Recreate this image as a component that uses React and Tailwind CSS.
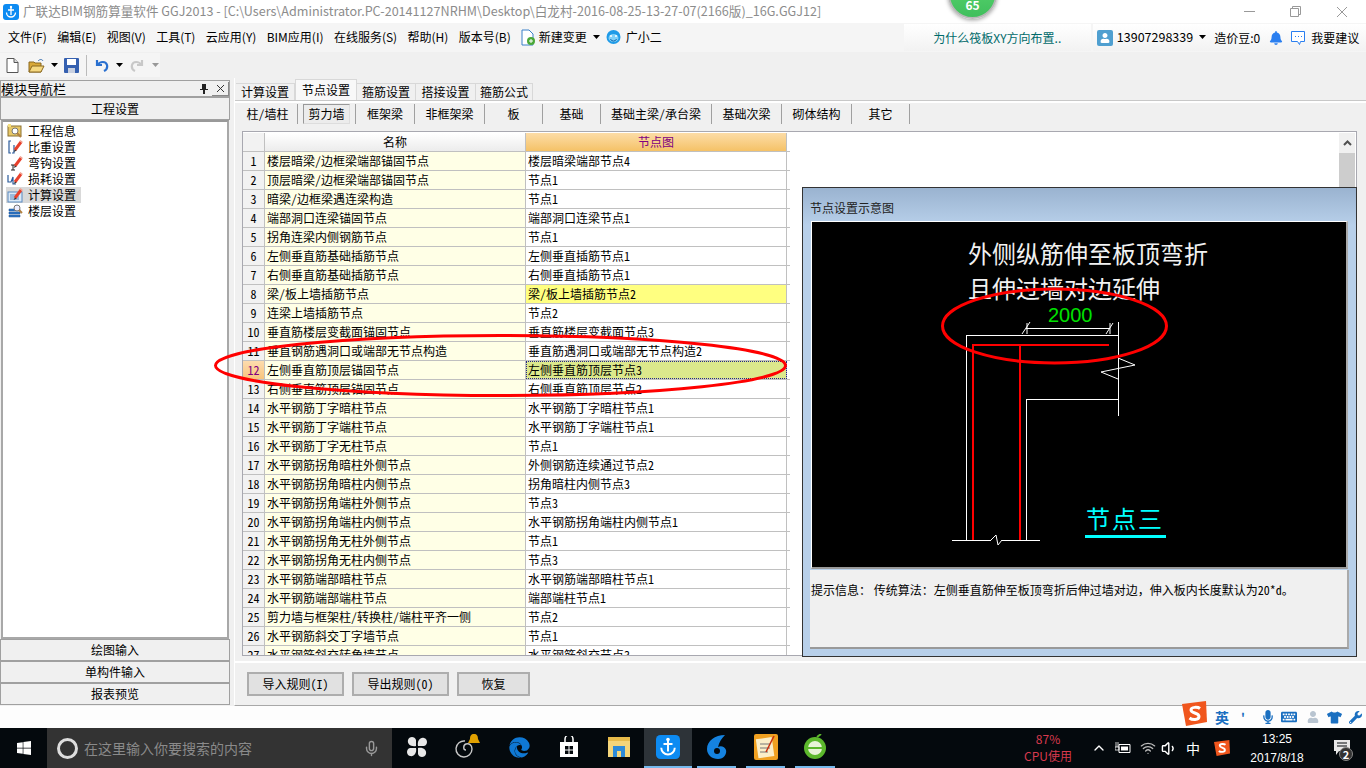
import React from "react";
import { FaWindows, FaEdge, FaBell, FaTshirt, FaWrench, FaMicrophone, FaKeyboard, FaUser } from "react-icons/fa";
import { Wifi, Volume1, ChevronUp, Mic } from "lucide-react";

const menus = ["文件(F)", "编辑(E)", "视图(V)", "工具(T)", "云应用(Y)", "BIM应用(I)", "在线服务(S)", "帮助(H)", "版本号(B)"];

const tabs = [
  { label: "计算设置", width: "w-[59px]" },
  { label: "节点设置", width: "w-[62px]", active: true },
  { label: "箍筋设置", width: "w-[59px]" },
  { label: "搭接设置", width: "w-[60px]" },
  { label: "箍筋公式", width: "w-[57px]" },
];

const subTabs = [
  { label: "柱/墙柱", width: "w-[60px]" },
  { label: "剪力墙", width: "w-[58px]", active: true },
  { label: "框架梁", width: "w-[59px]" },
  { label: "非框架梁", width: "w-[70px]" },
  { label: "板", width: "w-[58px]" },
  { label: "基础", width: "w-[58px]" },
  { label: "基础主梁/承台梁", width: "w-[111px]" },
  { label: "基础次梁", width: "w-[70px]" },
  { label: "砌体结构", width: "w-[70px]" },
  { label: "其它", width: "w-[58px]" },
];

const rows = [
  ["楼层暗梁/边框梁端部锚固节点", "楼层暗梁端部节点4"],
  ["顶层暗梁/边框梁端部锚固节点", "节点1"],
  ["暗梁/边框梁遇连梁构造", "节点1"],
  ["端部洞口连梁锚固节点", "端部洞口连梁节点1"],
  ["拐角连梁内侧钢筋节点", "节点1"],
  ["左侧垂直筋基础插筋节点", "左侧垂直插筋节点1"],
  ["右侧垂直筋基础插筋节点", "右侧垂直插筋节点1"],
  ["梁/板上墙插筋节点", "梁/板上墙插筋节点2"],
  ["连梁上墙插筋节点", "节点2"],
  ["垂直筋楼层变截面锚固节点", "垂直筋楼层变截面节点3"],
  ["垂直钢筋遇洞口或端部无节点构造", "垂直筋遇洞口或端部无节点构造2"],
  ["左侧垂直筋顶层锚固节点", "左侧垂直筋顶层节点3"],
  ["右侧垂直筋顶层锚固节点", "右侧垂直筋顶层节点2"],
  ["水平钢筋丁字暗柱节点", "水平钢筋丁字暗柱节点1"],
  ["水平钢筋丁字端柱节点", "水平钢筋丁字端柱节点1"],
  ["水平钢筋丁字无柱节点", "节点1"],
  ["水平钢筋拐角暗柱外侧节点", "外侧钢筋连续通过节点2"],
  ["水平钢筋拐角暗柱内侧节点", "拐角暗柱内侧节点3"],
  ["水平钢筋拐角端柱外侧节点", "节点3"],
  ["水平钢筋拐角端柱内侧节点", "水平钢筋拐角端柱内侧节点1"],
  ["水平钢筋拐角无柱外侧节点", "节点1"],
  ["水平钢筋拐角无柱内侧节点", "节点3"],
  ["水平钢筋端部暗柱节点", "水平钢筋端部暗柱节点1"],
  ["水平钢筋端部端柱节点", "端部端柱节点1"],
  ["剪力墙与框架柱/转换柱/端柱平齐一侧", "节点2"],
  ["水平钢筋斜交丁字墙节点", "节点1"],
  ["水平钢筋斜交转角墙节点", "水平钢筋斜交节点3"],
];

// little app logo, used in the title bar and on the taskbar
const GldIcon = ({ size = 16 }) => (
  <svg width={size} height={size} viewBox="0 0 16 16">
    <rect width="16" height="16" rx="3" fill="#0d8bf2" />
    <path d="M8 3v8M5 6h6M3.5 8.500a4.500 4.500 0 0 0 9 0" stroke="#fff" strokeWidth="1.300" fill="none" />
    <circle cx="8" cy="3" r="1.200" fill="#fff" />
  </svg>
);

const Caret = ({ color = "#000" }) => (
  <svg width="7" height="4" viewBox="0 0 7 4"><path d="M0 0h7L3.500 4z" fill={color} /></svg>
);

const Pencil = () => (
  <g>
    <path d="M8 11 14 3" stroke="#e8412c" strokeWidth="3" />
    <path d="M13 1.500l2.500 2" stroke="#f0a090" strokeWidth="1.500" />
    <path d="M6.500 13 8 10.500l1.600 1.200z" fill="#333" />
  </g>
);

const NavIcon = ({ type }) => {
  if (type === "info") {
    return (
      <svg width="16" height="16" viewBox="0 0 16 16">
        <rect x="1" y="3" width="13" height="10" fill="#e8c868" stroke="#8a7030" />
        <path d="M1 1h3v3H1z" fill="#f5e080" />
        <circle cx="8" cy="8" r="3" fill="#fff" stroke="#777" />
        <path d="M10 10l4 4" stroke="#b08040" strokeWidth="2" />
      </svg>
    );
  }
  if (type === "density") {
    return (
      <svg width="16" height="16" viewBox="0 0 16 16">
        <path d="M4 2H2v12h2M7 6v8H5" stroke="#2a5a9a" strokeWidth="1.200" fill="none" />
        <Pencil />
      </svg>
    );
  }
  if (type === "hook") {
    return (
      <svg width="16" height="16" viewBox="0 0 16 16">
        <path d="M4 10h4M6 10v5M4 15h4" stroke="#222" strokeWidth="1" fill="none" />
        <Pencil />
      </svg>
    );
  }
  if (type === "loss") {
    return (
      <svg width="16" height="16" viewBox="0 0 16 16">
        <path d="M1 4v7h3l2-5v7h3" stroke="#2a5a9a" strokeWidth="1.200" fill="none" />
        <Pencil />
      </svg>
    );
  }
  if (type === "calc") {
    return (
      <svg width="16" height="16" viewBox="0 0 16 16">
        <rect x="1" y="5" width="14" height="10" fill="#dbe9f7" stroke="#5a8ac0" />
        <path d="M3 8h7M3 10h9M3 12h9" stroke="#5a8ac0" />
        <Pencil />
      </svg>
    );
  }
  return (
    <svg width="16" height="16" viewBox="0 0 16 16">
      <path d="M2 6h11v2H2zM2 9h11v2H2zM2 12h11v2H2z" fill="#2f78c8" stroke="#1a4f90" strokeWidth=".5" />
      <circle cx="10" cy="5" r="3" fill="#eef" stroke="#777" />
      <path d="M12 7l3 3" stroke="#b08040" strokeWidth="2" />
    </svg>
  );
};

const navItems = [
  { label: "工程信息", type: "info" },
  { label: "比重设置", type: "density" },
  { label: "弯钩设置", type: "hook" },
  { label: "损耗设置", type: "loss" },
  { label: "计算设置", type: "calc", active: true },
  { label: "楼层设置", type: "floor" },
];

const TitleBar = () => (
  <div className="h-[23px] bg-white flex items-center pl-[3px]">
    <GldIcon />
    <span className="ml-[4px] text-[#8c8c8c] text-[12.6px] whitespace-nowrap">
      广联达BIM钢筋算量软件 GGJ2013 - [C:\Users\Administrator.PC-20141127NRHM\Desktop\白龙村-2016-08-25-13-27-07(2166版)_16G.GGJ12]
    </span>
    <div className="ml-auto flex items-center text-[#999]">
      <svg width="11" height="1" className="mr-[35px]"><path d="M0 .5h11" stroke="#999" /></svg>
      <svg width="11" height="11" viewBox="0 0 11 11" className="mr-[35px]">
        <path d="M.5 2.500h8v8h-8zM2.500 2.500v-2h8v8h-2" fill="none" stroke="#999" />
      </svg>
      <svg width="12" height="12" viewBox="0 0 12 12" className="mr-[18px]">
        <path d="M1 1l10 10M11 1L1 11" stroke="#999" />
      </svg>
    </div>
  </div>
);

const MenuBar = () => (
  <div className="h-[29px] flex items-center pl-[8px] bg-[#f5f5f5]">
    <div className="flex gap-[10.4px] whitespace-nowrap pb-[1px]">
      {menus.map((m) => (
        <span key={m}>{m}</span>
      ))}
    </div>
    <svg width="14" height="17" viewBox="0 0 14 17" className="ml-[10px]">
      <path d="M1 1h7l4 4v11H1z" fill="#fff" stroke="#3a80c8" />
      <circle cx="10" cy="12" r="4" fill="#4aa838" />
      <path d="M8 12h4M10 10v4" stroke="#fff" />
    </svg>
    <span className="ml-[4px] pb-[1px]">新建变更</span>
    <span className="ml-[6px] mb-[2px]"><Caret /></span>
    <svg width="17" height="17" viewBox="0 0 17 17" className="ml-[5px]">
      <circle cx="8.500" cy="8" r="7" fill="#1f9be8" />
      <ellipse cx="8.500" cy="9" rx="5" ry="4" fill="#7fd0f8" />
      <circle cx="6" cy="7" r="1" fill="#fff" />
      <circle cx="11" cy="7" r="1" fill="#fff" />
      <path d="M5.500 10a3.200 3.200 0 0 0 6 0" stroke="#0a60a8" fill="none" />
    </svg>
    <span className="ml-[4px] pb-[1px]">广小二</span>
    <div className="ml-[242px] w-[187px] h-[27px] bg-gradient-to-b from-[#ffffff] to-[#f2f2f2] flex items-center justify-center text-[#006a6a]">
      为什么筏板XY方向布置..
    </div>
    <div className="ml-[2px] flex-1 h-[27px] bg-gradient-to-b from-[#ffffff] to-[#f2f2f2] flex items-center pl-[4px] whitespace-nowrap">
      <span className="w-[16px] h-[16px] rounded-[2px] bg-[#4f9fd0] flex items-center justify-center">
        <FaUser size={10} color="#fff" />
      </span>
      <span className="ml-[4px] text-[12.5px]">13907298339</span>
      <span className="ml-[6px] mb-[2px]"><Caret /></span>
      <span className="ml-[8px]">造价豆:0</span>
      <span className="ml-[9px]"><FaBell size={14} color="#2a7ff0" /></span>
      <svg width="16" height="16" viewBox="0 0 16 16" className="ml-[7px]">
        <path d="M1.500 1.500h13v10h-4l-1 3-2-3h-6z" fill="#fff" stroke="#2a7ff0" />
        <path d="M5 6.500h1M8 6.500h1M11 6.500h1" stroke="#2a7ff0" />
      </svg>
      <span className="ml-[5px]">我要建议</span>
    </div>
  </div>
);

const Toolbar = () => (
  <div className="h-[26px] flex items-center">
    <div className="w-[160px] h-[24px] bg-[#f5f5f5] flex items-center pl-[6px]">
      <svg width="13" height="15" viewBox="0 0 13 15">
        <path d="M1 .5h7l4 4v10H1z" fill="#fff" stroke="#555" />
        <path d="M8 .5v4h4" fill="#ddd" stroke="#555" />
      </svg>
      <svg width="17" height="15" viewBox="0 0 17 15" className="ml-[9px]">
        <path d="M1 14V4h5l1 1h6v9z" fill="#d8a838" stroke="#8a6820" />
        <path d="M1 14l3-6h12l-3 6z" fill="#f5d880" stroke="#8a6820" />
        <path d="M10 3c2-2 4-2 5 0" stroke="#3a70b0" fill="none" />
      </svg>
      <span className="ml-[6px]"><Caret /></span>
      <svg width="15" height="15" viewBox="0 0 15 15" className="ml-[6px]">
        <rect width="15" height="15" rx="1" fill="#3560b0" />
        <rect x="3" y="1" width="9" height="6" fill="#fff" />
        <rect x="4" y="10" width="7" height="5" fill="#c8d0e0" />
      </svg>
      <span className="ml-[7px] w-[1px] h-[21px] bg-[#bbb]" />
      <svg width="14" height="15" viewBox="0 0 14 15" className="ml-[8px]">
        <path d="M2 2v5h5M2.500 7C5 3 11 3 12 7c.7 3-1 5-3 6" stroke="#2a70d0" strokeWidth="2.200" fill="none" />
      </svg>
      <span className="ml-[7px]"><Caret /></span>
      <svg width="14" height="15" viewBox="0 0 14 15" className="ml-[7px]">
        <path d="M12 2v5H7M11.500 7C9 3 3 3 2 7c-.7 3 1 5 3 6" stroke="#c8c8c8" strokeWidth="2.200" fill="none" />
      </svg>
      <span className="ml-[8px]"><Caret color="#999" /></span>
    </div>
  </div>
);

const SideNav = () => (
  <div className="w-[230px] pt-[2px] flex flex-col">
    <div className="h-[17px] border border-[#a0a0a0] flex items-center justify-between text-[13px] leading-none whitespace-nowrap">
      <span>模块导航栏</span>
      <div className="flex items-center gap-[4px]">
        <svg width="8" height="10" viewBox="0 0 8 10"><path d="M2 0h4v5h2v1H5v4H3V6H0V5h2z" fill="#222" /></svg>
        <span className="w-[17px] h-[14px] border-b border-r border-[#888] flex items-center justify-center">
          <svg width="9" height="9" viewBox="0 0 9 9"><path d="M1 1l7 7M8 1L1 8" stroke="#333" /></svg>
        </span>
      </div>
    </div>
    <div className="h-[23px] border border-[#a0a0a0] flex items-center justify-center">工程设置</div>
    <div className="h-[519px] mx-[1px] border-2 border-[#a8a8a8] border-t-[#999] bg-white pt-[1px] pl-[3px]">
      {navItems.map((item) => (
        <div key={item.label} className={`h-[16px] w-[75px] flex items-center pl-[1px] ${item.active ? "bg-[#d9d9d9]" : ""}`}>
          <NavIcon type={item.type} />
          <span className="ml-[5px] leading-none whitespace-nowrap">{item.label}</span>
        </div>
      ))}
    </div>
    {["绘图输入", "单构件输入", "报表预览"].map((b) => (
      <div key={b} className="h-[22px] border border-[#a0a0a0] flex items-center justify-center">{b}</div>
    ))}
  </div>
);

const TableRow = ({ n, name, node }) => {
  const selected = n === 12;
  let nodeClass = "bg-white";
  if (n === 8) nodeClass = "bg-[#ffff80]";
  if (selected) nodeClass = "bg-[#dce88c] outline-1 outline-dotted outline-[#22228a] -outline-offset-1";
  return (
    <div className="flex h-[19px] shrink-0 border-b border-[#c0c0c0] leading-[18px] whitespace-nowrap">
      <div className={`w-[22px] shrink-0 border-r border-[#c0c0c0] text-center ${selected ? "bg-gradient-to-b from-[#fddcae] to-[#f8c47c] text-[#800080]" : "bg-[#f2f2f2]"}`}>{n}</div>
      <div className="w-[261px] shrink-0 border-r border-[#c0c0c0] bg-[#ffffe6] pl-[2px] overflow-hidden">{name}</div>
      <div className={`w-[261px] shrink-0 border-r border-[#c0c0c0] pl-[2px] overflow-hidden ${nodeClass}`}>{node}</div>
    </div>
  );
};

const Diagram = () => (
  <div className="relative h-[348px] bg-black border-t border-l border-t-white border-l-white border-b-2 border-r-2 border-b-[#999] border-r-[#aaa]">
    <svg width="536" height="347" viewBox="812 222 536 347" className="block">
      <g stroke="#fff" fill="none" shapeRendering="crispEdges">
        <path d="M966 540V335H1118M1118 322V416M1026 540V399H1118M952 540H991M1002 540H1040" />
        <path d="M1026 328H1110" />
      </g>
      <g stroke="#fff" fill="none">
        <path d="M1118 358L1135 365L1101 372L1118 379" />
        <path d="M1022 334L1030 322M1106 334L1113 323M1027 323V334M1110 323V334" />
        <path d="M991 540L996 535L998 545L1002 540" />
      </g>
      <path d="M973 540V345H1109" stroke="#f00" strokeWidth="2" fill="none" />
      <path d="M1020 345V540" stroke="#f00" strokeWidth="2" />
    </svg>
    <div className="absolute left-[156px] top-[16px] text-[24px] leading-[30px] text-[#f2f2f2] whitespace-nowrap">外侧纵筋伸至板顶弯折</div>
    <div className="absolute left-[156px] top-[51px] text-[24px] leading-[30px] text-[#f2f2f2] whitespace-nowrap">且伸过墙对边延伸</div>
    <div className="absolute left-[236px] top-[83px] text-[20px] leading-[20px] text-[#00e000] [font-family:'Liberation_Sans',sans-serif]">2000</div>
    <div className="absolute left-[274px] top-[281px] text-[24px] tracking-[2px] leading-[30px] text-[#00ffff] whitespace-nowrap">节点三</div>
    <div className="absolute left-[273px] top-[313px] w-[81px] h-[3px] bg-[#00ffff]" />
  </div>
);

const NodeDialog = () => (
  <div className="absolute left-[559px] top-[55px] w-[555px] h-[470px] border border-[#333] bg-gradient-to-b from-[#9ab3d0] from-0% to-[#b8d0ea] to-[8%] flex flex-col px-[7px] z-10">
    <div className="h-[33px] shrink-0 flex items-center pt-[7px] text-[#222]">节点设置示意图</div>
    <div className="ml-[1px] mr-[1px]"><Diagram /></div>
    <div className="mt-[1px] h-[79px] bg-[#f0f0f0] border-b-2 border-r-2 border-b-[#999] border-r-[#aaa] pt-[12px] pl-[1px] leading-[16px] whitespace-nowrap">
      提示信息： 传统算法：左侧垂直筋伸至板顶弯折后伸过墙对边，伸入板内长度默认为<span className="[font-feature-settings:'hwid']">20*d</span>。
    </div>
  </div>
);

const RuleTable = () => (
  <div className="relative ml-[7px] mr-[9px] h-[525px] border border-[#a8a8b0] bg-white flex pt-[1px]">
    <div className="w-[547px] flex flex-col overflow-hidden [font-feature-settings:'hwid']">
      <div className="flex h-[19px] shrink-0 border-b border-[#c0c0c0] leading-[18px]">
        <div className="w-[22px] shrink-0 border-r border-[#c0c0c0] bg-[#f2f2f2]" />
        <div className="w-[261px] shrink-0 border-r border-[#c0c0c0] bg-gradient-to-b from-white to-[#ececec] text-center">名称</div>
        <div className="w-[261px] shrink-0 border-r border-[#c0c0c0] bg-gradient-to-b from-[#fcdca6] to-[#f5c266] text-center text-[#800080]">节点图</div>
      </div>
      {rows.map((r, i) => (
        <TableRow key={r[0]} n={i + 1} name={r[0]} node={r[1]} />
      ))}
    </div>
    <div className="ml-auto mr-[1px] w-[16px] flex flex-col">
      <div className="h-[20px] bg-[#f0f0f0] flex items-center justify-center">
        <svg width="9" height="6" viewBox="0 0 9 6"><path d="M1 5l3.500-3.500L8 5" stroke="#505050" strokeWidth="2" fill="none" /></svg>
      </div>
      <div className="flex-1 bg-[#cdcdcd]" />
    </div>
    <NodeDialog />
  </div>
);

const ActionButton = ({ width, children }) => (
  <div className={`${width} h-[24px] border-2 border-[#adadad] bg-[#e1e1e1] flex items-center justify-center`}>{children}</div>
);

const MainPanel = () => (
  <div className="ml-[4px] flex-1 flex flex-col border-l border-b border-l-white border-b-[#a8a8a8]">
    <div className="h-[23px] flex items-end pl-[1px] border-b border-[#c8c8c8]">
      {tabs.map((t) => (
        <div
          key={t.label}
          className={`${t.width} flex items-center justify-center border-t border-r border-[#d8d8d8] ${t.active ? "h-[21px] bg-[#f8f8f8] border-l" : "h-[17px]"}`}
        >
          {t.label}
        </div>
      ))}
    </div>
    <div className="h-[2px] bg-white" />
    <div className="h-[22px] flex items-center pl-[3px] [font-feature-settings:'hwid']">
      {subTabs.map((s) => (
        <div key={s.label} className={`${s.width} h-[20px] border-r border-[#a0a0a0] flex items-center justify-center`}>
          {s.active ? (
            <span className="w-[47px] h-[20px] border border-[#999] border-b-[#ddd] border-r-[#ddd] bg-[#ececec] flex items-center justify-center">{s.label}</span>
          ) : (
            s.label
          )}
        </div>
      ))}
    </div>
    <div className="h-[6px]" />
    <RuleTable />
    <div className="mt-[5px] flex-1 border-t-2 border-white flex gap-[8px] pl-[12px] pt-[9px] [font-feature-settings:'hwid']">
      <ActionButton width="w-[97px]">导入规则(I)</ActionButton>
      <ActionButton width="w-[97px]">导出规则(0)</ActionButton>
      <ActionButton width="w-[73px]">恢复</ActionButton>
    </div>
  </div>
);

const SogouLogo = ({ size = 25 }) => (
  <svg width={size} height={size} viewBox="0 0 25 25">
    <path d="M0 3L24 0l1 21-21 4z" fill="#f0561d" />
    <path d="M18 7.500c-2-1.500-9-2-9 1.500 0 3.500 8 2.500 8 6.500 0 4-7 3.500-9.500 1.500" stroke="#fff" strokeWidth="3" fill="none" />
  </svg>
);

const ImeBar = () => (
  <div className="h-[22px] bg-[#fdfdfd] flex justify-end">
    <div className="relative w-[184px] flex items-center text-[#1a6fc0]">
      <span className="-mt-[7px]"><SogouLogo /></span>
      <span className="ml-[8px] text-[14px] font-bold leading-none">英</span>
      <span className="ml-[12px] font-bold leading-none">'</span>
      <span className="ml-[16px]"><FaMicrophone size={14} /></span>
      <span className="ml-[6px]"><FaKeyboard size={16} /></span>
      <span className="ml-[10px] text-[#b8c4d0]"><FaUser size={12} /></span>
      <span className="ml-[8px]"><FaTshirt size={15} /></span>
      <span className="ml-[7px]"><FaWrench size={13} /></span>
    </div>
  </div>
);

const TaskSlot = ({ width, running, active, children }) => (
  <div className={`${width} h-full flex flex-col ${active ? "bg-[#2d3338]" : ""}`}>
    <div className="flex-1 flex items-center justify-center">{children}</div>
    <div className={`h-[2px] ${running ? "bg-[#76b9ed]" : ""} ${active ? "" : "mx-[5px]"}`} />
  </div>
);

const Taskbar = () => (
  <div className="h-[40px] bg-[#04090d] flex items-center text-white">
    <div className="w-[47px] flex justify-center"><FaWindows size={16} /></div>
    <div className="w-[345px] h-full bg-[#333] flex items-center pl-[10px]">
      <span className="w-[21px] h-[21px] rounded-full border-[3px] border-[#ddd]" />
      <span className="ml-[6px] text-[14px] text-[#8a8a8a] whitespace-nowrap">在这里输入你要搜索的内容</span>
      <span className="ml-auto mr-[12px]"><Mic size={17} color="#999" /></span>
    </div>
    <TaskSlot width="w-[50px]">
      <svg width="22" height="22" viewBox="0 0 22 22">
        <path d="M10 10C5 11 1 8 2 4s7-4 8 0zM12 10C11 5 14 1 18 2s4 7 0 8zM12 12c5-1 9 2 8 6s-7 4-8 0zM10 12c1 5-2 9-6 8s-4-7 0-8z" fill="#e8e8e8" />
      </svg>
    </TaskSlot>
    <TaskSlot width="w-[51px]">
      <svg width="28" height="26" viewBox="0 0 28 26">
        <path d="M11 7a8 8 0 1 0 7 8c0-4-3-6-6-5s-3 6 0 6" stroke="#c8c8c8" strokeWidth="1.400" fill="none" />
        <path d="M20 0c3 0 4 2 4 5l2 4H14l2-4c0-3 1-5 4-5z" fill="#e0a000" />
      </svg>
    </TaskSlot>
    <TaskSlot width="w-[52px]"><FaEdge size={21} color="#0f78d4" /></TaskSlot>
    <TaskSlot width="w-[48px]">
      <svg width="20" height="22" viewBox="0 0 20 22">
        <path d="M1 6h18v15H1z" fill="#fff" />
        <path d="M6 6V3a4 4 0 0 1 8 0v3" stroke="#fff" strokeWidth="1.500" fill="none" />
        <path d="M6 10h3.500v3.500H6zM10.500 10H14v3.500h-3.500zM6 14.500h3.500V18H6zM10.500 14.500H14V18h-3.500z" fill="#04090d" />
      </svg>
    </TaskSlot>
    <TaskSlot width="w-[51px]">
      <svg width="22" height="20" viewBox="0 0 22 20">
        <path d="M0 0h22v20H0z" fill="#f4d57a" />
        <path d="M0 0h22v4H0z" fill="#e8bb4a" />
        <path d="M5 9h12v11H5z" fill="#2c8ad8" />
        <path d="M9 14h4v6H9z" fill="#f4d57a" />
      </svg>
    </TaskSlot>
    <TaskSlot width="w-[48px]" running active><GldIcon size={24} /></TaskSlot>
    <TaskSlot width="w-[49px]" running>
      <svg width="24" height="26" viewBox="0 0 24 26">
        <path d="M20 1C10 1 2 7 2 15c0 6 5 10 11 10 6 0 9-5 8-9-1-3-5-5-8-3 1-5 4-9 7-12z" fill="#1583e0" />
        <circle cx="12" cy="17" r="3" fill="#04090d" />
      </svg>
    </TaskSlot>
    <TaskSlot width="w-[49px]" running>
      <svg width="24" height="26" viewBox="0 0 24 26">
        <rect width="24" height="26" rx="2" fill="#f0a020" />
        <rect x="3" y="4" width="16" height="19" fill="#fbeec8" transform="rotate(-8 12 13)" />
        <path d="M6 10h10M6 14h10M6 18h8" stroke="#777" />
        <path d="M20 2l-8 16" stroke="#c83010" strokeWidth="1.500" />
      </svg>
    </TaskSlot>
    <TaskSlot width="w-[50px]" running>
      <svg width="24" height="26" viewBox="0 0 24 26">
        <circle cx="12" cy="14" r="11" fill="#5cb82c" />
        <circle cx="12" cy="14" r="7" fill="#e8f4d8" />
        <path d="M5 14h14" stroke="#5cb82c" strokeWidth="2" />
        <path d="M14 3l4-3" stroke="#5cb82c" strokeWidth="2" />
      </svg>
    </TaskSlot>
    <div className="ml-[178px] w-[60px] flex flex-col items-center text-[#d8394e] leading-[17px] pb-[2px]">
      <span>87%</span>
      <span className="whitespace-nowrap">CPU使用</span>
    </div>
    <div className="ml-[12px] w-[17px] flex justify-center"><ChevronUp size={16} /></div>
    <div className="w-[31px] flex justify-center">
      <svg width="16" height="14" viewBox="0 0 16 14">
        <path d="M4 3.500h11v8H4z" fill="none" stroke="#fff" />
        <path d="M6 5.500h7v4H6z" fill="#fff" />
        <path d="M1 1v5M3 1v5M0 6h4v3H0z" stroke="#fff" strokeWidth=".8" fill="none" />
      </svg>
    </div>
    <div className="w-[20px] flex justify-center"><Wifi size={16} color="#bbb" /></div>
    <div className="w-[22px] flex justify-center"><Volume1 size={17} /></div>
    <div className="w-[26px] text-center text-[14px]">中</div>
    <div className="w-[31px] flex justify-center"><SogouLogo size={16} /></div>
    <div className="w-[80px] flex flex-col items-center leading-[19px] pt-[2px] [font-family:'Liberation_Sans',sans-serif]">
      <span>13:25</span>
      <span className="whitespace-nowrap">2017/8/18</span>
    </div>
    <div className="relative w-[49px] flex justify-center">
      <svg width="18" height="16" viewBox="0 0 18 16">
        <path d="M1 0h16v11H6l-3 4v-4H1z" fill="#e8e8e8" />
        <path d="M4 3h10M4 6h10" stroke="#04090d" />
      </svg>
      <span className="absolute left-[22px] top-[7px] w-[14px] h-[14px] rounded-full bg-[#333] border border-[#888] text-[11px] font-bold leading-[12px] text-center">2</span>
    </div>
  </div>
);

const App = () => {
  return (
    <div className="relative w-[1366px] h-[768px] overflow-hidden bg-[#f0f0f0] text-[12px] text-black [font-family:'Noto_Sans_CJK_SC',sans-serif]">
      <TitleBar />
      <MenuBar />
      <Toolbar />
      <div className="h-[628px] flex">
        <SideNav />
        <MainPanel />
      </div>
      <ImeBar />
      <Taskbar />

      {/* score badge hanging from the top edge */}
      <div className="absolute left-[948px] top-[-30px] w-[49px] h-[49px] rounded-full border-2 border-[#b8b8b8] bg-gradient-to-b from-[#5ed872] to-[#3fbf5c] shadow-[0_1px_4px_rgba(0,0,0,0.4)] flex items-end justify-center pb-[3px] text-white font-bold">
        65
      </div>

      {/* red hand drawn marks over the screen */}
      <svg width="1366" height="768" className="absolute left-0 top-0 z-20 pointer-events-none">
        <ellipse cx="500.500" cy="365.500" rx="285" ry="30" fill="none" stroke="#f00" strokeWidth="3" />
        <ellipse cx="1054.500" cy="326" rx="112" ry="37" fill="none" stroke="#f00" strokeWidth="3" />
      </svg>
    </div>
  );
};

export default App;
